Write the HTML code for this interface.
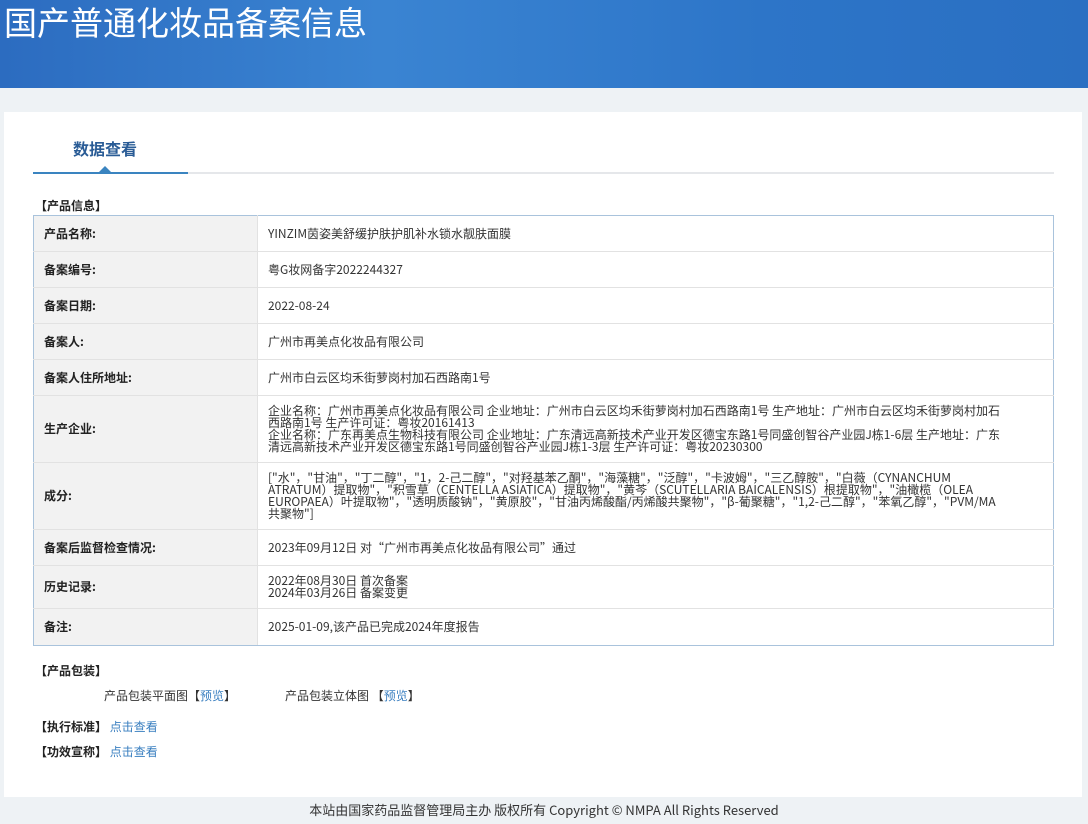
<!DOCTYPE html>
<html><head><meta charset="utf-8"><style>
*{margin:0;padding:0;box-sizing:border-box}
body{width:1088px;height:824px;background:#eef2f5;font-family:"Noto Sans CJK SC","Liberation Sans",sans-serif;font-size:12px;color:#333;position:relative;overflow:hidden}
.hdr{position:absolute;left:0;top:0;width:1088px;height:88px;background:linear-gradient(90deg,#2c6cc0 0%,#3a84d2 35%,#2d75c8 70%,#2a6fc2 100%)}
.hdr h1{position:absolute;left:4px;top:1px;font-size:33px;font-weight:normal;color:#fff;font-family:"Noto Sans CJK SC",sans-serif;line-height:40px}
.panel{position:absolute;left:4px;top:112px;width:1078px;height:685px;background:#fff}
.tab{position:absolute;left:73px;top:136px;font-size:16px;font-weight:bold;color:#2a5c96}
.line{position:absolute;left:188px;top:172px;width:866px;height:2px;background:#e5e7ea}
.bl{position:absolute;left:33px;top:172px;width:155px;height:2px;background:#3a84c0}
.tri{position:absolute;left:99px;top:166px;width:0;height:0;border-left:6px solid transparent;border-right:6px solid transparent;border-bottom:6px solid #3a84c0}
.sec{position:absolute;font-weight:bold;color:#222;font-size:12px;line-height:14px}
table{position:absolute;left:33px;top:215px;width:1021px;border-collapse:collapse;border:1px solid #a9c3dc}
td{border-bottom:1px solid #e2e2e2;vertical-align:middle;line-height:12px;font-size:12px;white-space:nowrap}
tr:last-child td{border-bottom:1px solid #a9c3dc}
td.l{width:224px;background:#f2f2f2;font-weight:bold;padding-left:10px;color:#222;border-right:1px solid #e2e2e2;border-left:1px solid #a9c3dc}
td.v{padding:0 10px;color:#333;border-right:1px solid #a9c3dc}
a{color:#3a7fc0;text-decoration:none}
.foot{position:absolute;left:0;width:1088px;top:801px;text-align:center;color:#333;font-size:13px;line-height:18px}
.t{position:absolute;line-height:14px}
</style></head><body>
<div class="hdr"><h1>国产普通化妆品备案信息</h1></div>
<div class="panel"></div>
<div class="tab">数据查看</div>
<div class="line"></div><div class="bl"></div><div class="tri"></div>
<div class="sec" style="left:35px;top:199px">【产品信息】</div>
<table>
<tr style="height:36px"><td class="l">产品名称:</td><td class="v">YINZIM茵姿美舒缓护肤护肌补水锁水靓肤面膜</td></tr>
<tr style="height:36px"><td class="l">备案编号:</td><td class="v">粤G妆网备字2022244327</td></tr>
<tr style="height:36px"><td class="l">备案日期:</td><td class="v">2022-08-24</td></tr>
<tr style="height:36px"><td class="l">备案人:</td><td class="v">广州市再美点化妆品有限公司</td></tr>
<tr style="height:36px"><td class="l">备案人住所地址:</td><td class="v">广州市白云区均禾街萝岗村加石西路南1号</td></tr>
<tr style="height:67px"><td class="l">生产企业:</td><td class="v">企业名称：广州市再美点化妆品有限公司 企业地址：广州市白云区均禾街萝岗村加石西路南1号 生产地址：广州市白云区均禾街萝岗村加石<br>西路南1号 生产许可证：粤妆20161413<br>企业名称：广东再美点生物科技有限公司 企业地址：广东清远高新技术产业开发区德宝东路1号同盛创智谷产业园J栋1-6层 生产地址：广东<br>清远高新技术产业开发区德宝东路1号同盛创智谷产业园J栋1-3层 生产许可证：粤妆20230300</td></tr>
<tr style="height:67px"><td class="l">成分:</td><td class="v">["水"，"甘油"，"丁二醇"，"1，2-己二醇"，"对羟基苯乙酮"，"海藻糖"，"泛醇"，"卡波姆"，"三乙醇胺"，"白薇（CYNANCHUM<br>ATRATUM）提取物"，"积雪草（CENTELLA ASIATICA）提取物"，"黄芩（SCUTELLARIA BAICALENSIS）根提取物"，"油橄榄（OLEA<br>EUROPAEA）叶提取物"，"透明质酸钠"，"黄原胶"，"甘油丙烯酸酯/丙烯酸共聚物"，"β-葡聚糖"，"1,2-己二醇"，"苯氧乙醇"，"PVM/MA<br>共聚物"]</td></tr>
<tr style="height:36px"><td class="l">备案后监督检查情况:</td><td class="v">2023年09月12日 对“广州市再美点化妆品有限公司”通过</td></tr>
<tr style="height:43px"><td class="l">历史记录:</td><td class="v">2022年08月30日 首次备案<br>2024年03月26日 备案变更</td></tr>
<tr style="height:37px"><td class="l">备注:</td><td class="v">2025-01-09,该产品已完成2024年度报告</td></tr>
</table>
<div class="sec" style="left:35px;top:664px">【产品包装】</div>
<div class="t" style="left:104px;top:689px">产品包装平面图【<a>预览</a>】</div>
<div class="t" style="left:285px;top:689px">产品包装立体图 【<a>预览</a>】</div>
<div class="t" style="left:35px;top:720px"><b style="color:#222">【执行标准】</b> <a>点击查看</a></div>
<div class="t" style="left:35px;top:745px"><b style="color:#222">【功效宣称】</b> <a>点击查看</a></div>
<div class="foot">本站由国家药品监督管理局主办 版权所有 Copyright © NMPA All Rights Reserved</div>
</body></html>
